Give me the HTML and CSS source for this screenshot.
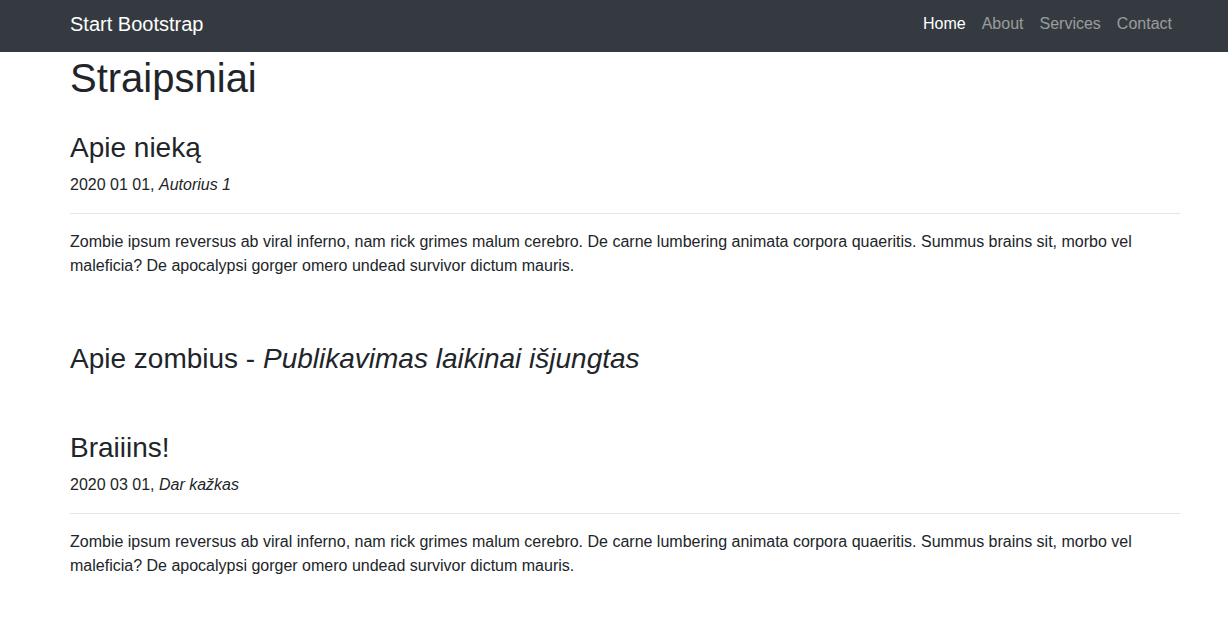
FILE: index.html
```html
<!DOCTYPE html>
<html lang="lt">
<head>
<meta charset="utf-8">
<title>Straipsniai</title>
<link rel="stylesheet" href="styles.css">
</head>
<body>
<nav class="navbar">
  <div class="nav-inner">
    <a class="brand" href="#">Start Bootstrap</a>
    <ul class="nav-links">
      <li><a class="nav-link active" href="#">Home</a></li>
      <li><a class="nav-link" href="#">About</a></li>
      <li><a class="nav-link" href="#">Services</a></li>
      <li><a class="nav-link" href="#">Contact</a></li>
    </ul>
  </div>
</nav>
<main class="container">
  <h1 class="page-title">Straipsniai</h1>
  <article class="post">
    <h3 class="post-title">Apie nieką</h3>
    <p class="meta">2020 01 01, <em>Autorius 1</em></p>
    <hr class="divider">
    <p class="post-body">Zombie ipsum reversus ab viral inferno, nam rick grimes malum cerebro. De carne lumbering animata corpora quaeritis. Summus brains sit, morbo vel maleficia? De apocalypsi gorger omero undead survivor dictum mauris.</p>
  </article>
  <article class="post">
    <h3 class="post-title">Apie zombius - <em>Publikavimas laikinai išjungtas</em></h3>
  </article>
  <article class="post">
    <h3 class="post-title">Braiiins!</h3>
    <p class="meta">2020 03 01, <em>Dar kažkas</em></p>
    <hr class="divider">
    <p class="post-body">Zombie ipsum reversus ab viral inferno, nam rick grimes malum cerebro. De carne lumbering animata corpora quaeritis. Summus brains sit, morbo vel maleficia? De apocalypsi gorger omero undead survivor dictum mauris.</p>
  </article>
</main>
</body>
</html>
```
FILE: styles.css
```css
* { box-sizing: border-box; }
html, body {
  margin: 0;
  padding: 0;
}
body {
  font-family: "Liberation Sans", Arial, sans-serif;
  font-size: 16px;
  line-height: 1.5;
  color: #212529;
  background: #fff;
}
a { text-decoration: none; }

.navbar {
  background: #343a40;
  height: 52px;
  padding: 9px 48px 13px 70px;
}
.nav-inner {
  display: flex;
  align-items: center;
  justify-content: space-between;
  height: 30px;
}
.brand {
  color: #fff;
  font-size: 20px;
  line-height: 30px;
}
.nav-links {
  display: flex;
  list-style: none;
  margin: 0;
  padding: 0;
}
.nav-link {
  display: block;
  padding: 0 8px;
  line-height: 24px;
  color: rgba(255, 255, 255, 0.5);
}
.nav-link.active { color: #fff; }

.container {
  padding: 0 48px 40px 70px;
}
.page-title {
  font-size: 40px;
  font-weight: 500;
  line-height: 1.2;
  margin: 2px 0 0;
}
.post {
  display: flex;
  flex-direction: column;
  margin-top: 29px;
}
.post + .post { margin-top: 48px; }
.post-title {
  font-size: 28px;
  font-weight: 500;
  line-height: 1.2;
  margin: 0 0 8px;
}
.meta {
  margin: 0;
}
.divider {
  border: 0;
  border-top: 1px solid rgba(0, 0, 0, 0.1);
  margin: 16px 0;
  height: 0;
}
.post-body {
  margin: 0 0 16px;
}
```
